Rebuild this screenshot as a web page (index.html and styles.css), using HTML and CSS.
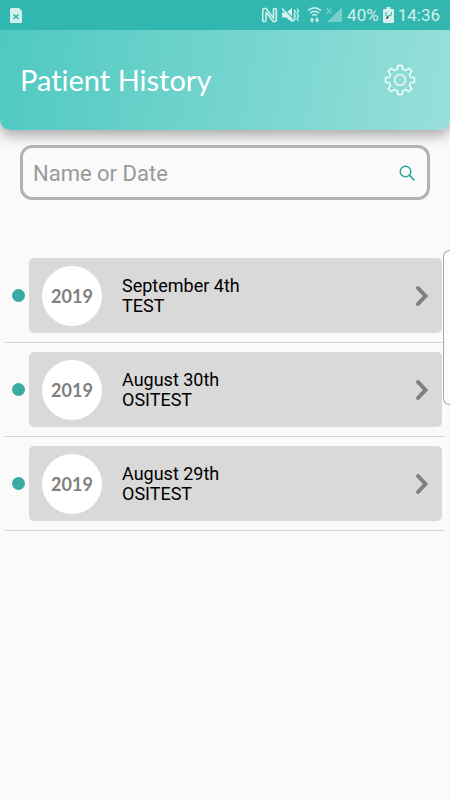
FILE: index.html
```html
<!DOCTYPE html>
<html lang="en">
<head>
<meta charset="utf-8">
<meta name="viewport" content="width=device-width, initial-scale=1">
<title>Patient History</title>
<link rel="stylesheet" href="styles.css">
</head>
<body>
<div class="status">
  <svg class="status-file" width="12" height="15" viewBox="0 0 12 15"><path fill="#d3f0ed" d="M1 0h8l3 3v11l-1 1H1l-1-1V1z"/><path d="M3.500 6.500l5 4.500M8.500 6.500l-5 4.500" stroke="#32b7b0" stroke-width="1.600"/></svg>
  <div class="status-right">
    <svg width="84" height="18" viewBox="0 0 84 18" fill="none" stroke="#d3f0ed">
      <path d="M3.500 15.500H2A1.300 1.300 0 0 1 .7 14.200V3.800A1.300 1.300 0 0 1 2 2.500h2l7.500 9.500V2.500M4 6v9.500M11.500 2.500H13A1.300 1.300 0 0 1 14.300 3.800v10.400A1.300 1.300 0 0 1 13 15.500h-1.800L4 6" stroke-width="1.600"/>
      <path fill="#d3f0ed" stroke="none" d="M20 6.500h4l6-4.500v14l-6-4.500h-4z"/>
      <path stroke="#32b7b0" stroke-width="1.200" d="M21.500 2.500l11 12"/><path stroke-width="1.500" d="M20 2.500l12 13"/>
      <path stroke-width="1.300" d="M32 4l1.500 1.500L32 8l1.500 2L32 12l1.500 2M35 2.500L36.500 5 35 7.500 36.500 10 35 12.500 36.500 15"/>
      <path stroke-width="1.400" d="M46 4.500q6.500-5.500 13 0M48 7.200q4.500-4 9 0M50.300 9.600q2.200-2 4.400 0"/>
      <path fill="#d3f0ed" stroke="none" d="M47.800 14.200l2.200-2.700 2.200 2.700h-1.400V16.500h-1.600v-2.300zM52.800 13.800l2.200 2.700 2.200-2.700h-1.400v-2.300h-1.600v2.300z"/>
      <path fill="#79cfca" stroke="none" d="M80 1.500V16H65z"/><path stroke="#79cfca" stroke-width="1.300" d="M64.500 2.500l5 5M69.500 2.500l-5 5"/>
    </svg>
    <span class="percent">40%</span>
    <svg class="battery" width="11" height="16" viewBox="0 0 11 16"><path fill="#d3f0ed" d="M3.500 0h4v2H10l1 1v12l-1 1H1l-1-1V3l1-1h2.500z"/><path fill="none" stroke="#32b7b0" d="M3 5v4h2M8.500 5L8 8.500H5.500"/><path d="M3.500 11.500l2-2" stroke="#222" stroke-width="1.300"/></svg>
    <span>14:36</span>
  </div>
</div>
<header class="header">
  <h1>Patient History</h1>
  <button class="settings" aria-label="Settings">
    <svg width="32" height="32" viewBox="-16 -16 32 32" fill="none" stroke="#fff" stroke-width="1.300" stroke-linejoin="round">
      <circle r="5.400"/>
      <path d="M-2.200-14.500H2.200L2.800-10.600L5.500-9.500L8.700-11.800L11.800-8.700L9.500-5.500L10.600-2.800L14.500-2.200V2.200L10.600 2.800L9.500 5.500L11.800 8.700L8.700 11.800L5.500 9.500L2.800 10.600L2.200 14.500H-2.200L-2.800 10.600L-5.500 9.500L-8.700 11.800L-11.800 8.700L-9.500 5.500L-10.600 2.800L-14.500 2.200V-2.200L-10.600-2.800L-9.500-5.500L-11.800-8.700L-8.700-11.800L-5.500-9.500L-2.800-10.600Z"/>
    </svg>
  </button>
</header>
<main>
  <form class="search">
    <input type="text" placeholder="Name or Date" aria-label="Name or Date">
    <button class="search-button" aria-label="Search"><svg width="16" height="16" viewBox="0 0 16 16" fill="none" stroke="#2ba79f" stroke-width="1.500"><circle cx="6.500" cy="6.500" r="5.300"/><path d="M10.400 10.400l5 5"/></svg></button>
  </form>
  <ul class="history">
    <li><span class="dot"></span><a class="card" href="#"><span class="year">2019</span><span class="details">September 4th<br>TEST</span><svg class="chevron" width="14" height="22" viewBox="0 0 14 22"><path d="M3 3l7.500 8L3 19"/></svg></a></li>
    <li><span class="dot"></span><a class="card" href="#"><span class="year">2019</span><span class="details">August 30th<br>OSITEST</span><svg class="chevron" width="14" height="22" viewBox="0 0 14 22"><path d="M3 3l7.500 8L3 19"/></svg></a></li>
    <li><span class="dot"></span><a class="card" href="#"><span class="year">2019</span><span class="details">August 29th<br>OSITEST</span><svg class="chevron" width="14" height="22" viewBox="0 0 14 22"><path d="M3 3l7.500 8L3 19"/></svg></a></li>
  </ul>
</main>
<div class="edge-panel"></div>
</body>
</html>
```

FILE: styles.css
```css
* { box-sizing: border-box; }
body {
  margin: 0;
  min-height: 100vh;
  position: relative;
  overflow-x: hidden;
  background: #fafafa;
  font-family: Roboto, sans-serif;
  color: #000;
}
button { padding: 0; border: 0; background: none; }
svg { display: block; flex: none; }
.status {
  position: relative;
  z-index: 1;
  height: 30px;
  padding: 0 10px;
  display: flex;
  align-items: center;
  justify-content: space-between;
  background: #32b7b0;
  color: #d3f0ed;
  font-size: 17px;
  line-height: 32px;
}
.status-right { display: flex; align-items: center; }
.percent { margin-left: 1px; }
.battery { margin: 0 4px; }
.header {
  height: 100px;
  padding: 0 34px 0 20px;
  display: flex;
  align-items: center;
  justify-content: space-between;
  border-radius: 0 0 10px 10px;
  background: linear-gradient(100deg, #4ec9c1, #98dfda);
  box-shadow: 0 5px 14px rgba(0, 0, 0, .35);
}
h1 {
  margin: 0;
  color: #fff;
  font: 400 29px/36px Lato, sans-serif;
  font-variant-ligatures: none;
}
.search {
  height: 55px;
  margin: 15px 20px 0;
  padding: 0 12px 0 10px;
  display: flex;
  align-items: center;
  border: 3px solid #b2b2b2;
  border-radius: 12px;
}
.search input {
  flex: 1;
  min-width: 0;
  padding: 3px 0 0;
  border: 0;
  outline: 0;
  background: none;
  font: 22px/30px Roboto, sans-serif;
}
.search input::placeholder { color: #999; opacity: 1; }
.history {
  list-style: none;
  margin: 58px 5px 0;
  padding: 0;
}
.history li {
  padding: 0 3px 9px 7px;
  margin-bottom: 9px;
  display: flex;
  align-items: center;
  gap: 4px;
  border-bottom: 1px solid #d6d6d6;
}
.dot {
  width: 13px;
  height: 13px;
  border-radius: 50%;
  background: #3aaaa4;
}
.card {
  flex: 1;
  height: 75px;
  padding: 0 13px;
  display: flex;
  align-items: center;
  border-radius: 5px;
  background: #d9d9d9;
  color: #000;
  text-decoration: none;
}
.year {
  width: 60px;
  height: 60px;
  border-radius: 50%;
  background: #fff;
  color: #808080;
  text-align: center;
  font: 700 18px/60px Lato, sans-serif;
}
.details {
  flex: 1;
  margin-left: 20px;
  font-size: 18px;
  line-height: 20px;
}
.chevron {
  fill: none;
  stroke: #808080;
  stroke-width: 4;
  stroke-linecap: round;
}
.edge-panel {
  position: absolute;
  top: 250px;
  right: 0;
  width: 7px;
  height: 155px;
  border: 1px solid #aaa;
  border-right: 0;
  border-radius: 7px 0 0 7px;
  background: #fdfdfd;
}
```
